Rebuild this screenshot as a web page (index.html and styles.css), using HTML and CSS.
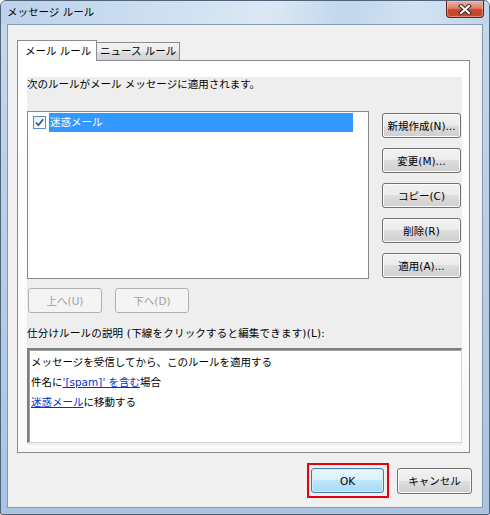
FILE: index.html
```html
<!DOCTYPE html>
<html lang="ja">
<head>
<meta charset="utf-8">
<title>メッセージ ルール</title>
<link rel="stylesheet" href="styles.css">
</head>
<body>
<div class="window">
  <div class="titlebar">
    <span class="title">メッセージ ルール</span>
    <button class="close" aria-label="閉じる">
      <svg width="14" height="11" viewBox="0 0 14 11">
        <path d="M3 2 L11 9 M11 2 L3 9" stroke="#3a2a28" stroke-width="4" stroke-linecap="square" fill="none"/>
        <path d="M3 2 L11 9 M11 2 L3 9" stroke="#ffffff" stroke-width="2" stroke-linecap="square" fill="none"/>
      </svg>
    </button>
  </div>
  <div class="client">
    <div class="tabs">
      <div class="tab active">メール ルール</div>
      <div class="tab">ニュース ルール</div>
    </div>
    <div class="panel">
      <div class="page">
        <div class="intro">次のルールがメール メッセージに適用されます。</div>
        <div class="rules-row">
          <div class="listbox">
            <div class="item">
              <svg class="check" width="13" height="13" viewBox="0 0 13 13">
                <defs>
                  <linearGradient id="cb" x1="0" y1="0" x2="1" y2="1">
                    <stop offset="0" stop-color="#e4ecf5"/>
                    <stop offset="1" stop-color="#ffffff"/>
                  </linearGradient>
                </defs>
                <rect x="0.5" y="0.5" width="12" height="12" fill="url(#cb)" stroke="#5b8bc4"/>
                <path d="M3 6.5 L5.4 9.2 L10.2 3.2" stroke="#1f5bb0" stroke-width="1.7" fill="none"/>
              </svg>
              <span class="item-label">迷惑メール</span>
            </div>
          </div>
          <div class="side-buttons">
            <button class="btn">新規作成(N)...</button>
            <button class="btn">変更(M)...</button>
            <button class="btn">コピー(C)</button>
            <button class="btn">削除(R)</button>
            <button class="btn">適用(A)...</button>
          </div>
        </div>
        <div class="move-row">
          <button class="btn disabled">上へ(U)</button>
          <button class="btn disabled">下へ(D)</button>
        </div>
        <div class="desc-label">仕分けルールの説明 (下線をクリックすると編集できます)(L):</div>
        <div class="desc">
          <div class="line">メッセージを受信してから、このルールを適用する</div>
          <div class="line">件名に<a href="#">'[spam]' を含む</a>場合</div>
          <div class="line"><a href="#">迷惑メール</a>に移動する</div>
        </div>
      </div>
    </div>
    <div class="footer">
      <div class="focus"><button class="btn ok">OK</button></div>
      <button class="btn cancel">キャンセル</button>
    </div>
  </div>
</div>
</body>
</html>
```

FILE: styles.css
```css
* { box-sizing: border-box; }

html, body {
  margin: 0;
  padding: 0;
  background: #ffffff;
}

body {
  font-family: "DejaVu Sans", "Noto Sans CJK JP", sans-serif;
  font-size: 10.5px;
  color: #000;
}

.window {
  width: 490px;
  height: 515px;
  border: 1px solid #50627a;
  border-radius: 6px 6px 2px 2px;
  background: linear-gradient(to bottom, #c7d9ec 0%, #b9d0e8 40%, #a9c4e1 100%);
  padding: 0 6px 6px 6px;
  display: flex;
  flex-direction: column;
  overflow: hidden;
}

.titlebar {
  height: 23px;
  display: flex;
  align-items: flex-start;
  margin: 0 -6px;
  padding: 0 5px 0 6px;
  background: linear-gradient(100deg, #bcd2ea 0%, #cfe0f1 35%, #dce8f4 55%, #c2d7ec 70%, #d2e2f2 85%, #c0d5eb 100%);
}

.title {
  flex: 1;
  line-height: 23px;
  color: #000;
}

.close {
  width: 38px;
  height: 17px;
  margin: 0;
  padding: 0;
  border: 1px solid #5c2418;
  border-top: none;
  border-radius: 0 0 4px 4px;
  background: linear-gradient(to bottom, #eab2a2 0%, #dd8068 45%, #c9452a 55%, #c4482c 100%);
  box-shadow: inset 0 0 0 1px rgba(255, 200, 180, 0.5);
  display: flex;
  align-items: center;
  justify-content: center;
}

.client {
  height: 484px;
  border: 1px solid #8598ad;
  background: #f0f0f0;
  display: flex;
  flex-direction: column;
}

.tabs {
  display: flex;
  align-items: flex-end;
  margin: 15px 0 0 9px;
  height: 20px;
  position: relative;
  z-index: 1;
}

.tab {
  width: 83px;
  height: 18px;
  line-height: 16px;
  padding: 0 0 0 3px;
  border: 1px solid #898c95;
  border-bottom: none;
  background: linear-gradient(to bottom, #f3f3f3 0%, #ebebeb 50%, #dddddd 50%, #d4d4d4 100%);
  color: #000;
  white-space: nowrap;
  overflow: hidden;
}

.tab.active {
  width: 80px;
  height: 21px;
  line-height: 20px;
  padding: 0 0 0 7px;
  margin-bottom: -1px;
  background: #ffffff;
}

.tab.active + .tab {
  border-left: none;
}

.panel {
  margin: 0 12px 0 9px;
  height: 393px;
  border: 1px solid #898c95;
  background: linear-gradient(to bottom, #ffffff 0%, #f9f9f9 100%);
  padding: 16px 7px 7px 9px;
}

.page {
  background: #eeeeee;
  height: 368px;
  padding-bottom: 2px;
  display: flex;
  flex-direction: column;
}

.intro {
  line-height: 14px;
  height: 14px;
}

.rules-row {
  display: flex;
  margin-top: 20px;
  gap: 13px;
}

.listbox {
  width: 342px;
  height: 168px;
  border: 1px solid #828790;
  background: #ffffff;
  padding: 1px 0 0 5px;
}

.item {
  display: flex;
  align-items: center;
  height: 19px;
}

.check {
  flex: none;
  margin-right: 3px;
}

.item-label {
  background: #3399ff;
  color: #ffffff;
  height: 19px;
  line-height: 19px;
  width: 304px;
  padding-left: 1px;
}

.side-buttons {
  display: flex;
  flex-direction: column;
  gap: 10px;
  margin-top: 2px;
}

.btn {
  font-family: inherit;
  font-size: 10.5px;
  color: #000;
  width: 79px;
  height: 25px;
  padding: 0;
  border: 1px solid #707070;
  border-radius: 3px;
  background: linear-gradient(to bottom, #f2f2f2 0%, #ebebeb 50%, #dddddd 50%, #cfcfcf 100%);
  box-shadow: inset 0 0 0 1px #fbfbfb;
  white-space: nowrap;
}

.move-row {
  display: flex;
  gap: 13px;
  margin-top: 9px;
  padding-left: 1px;
}

.btn.disabled {
  width: 74px;
  height: 25px;
  border-color: #adb2b5;
  background: #f4f4f4;
  box-shadow: none;
  color: #a0a0a0;
}

.desc-label {
  margin-top: 12px;
  line-height: 16px;
  height: 16px;
  letter-spacing: 0.2px;
}

.desc {
  margin-top: 7px;
  height: 95px;
  background: #ffffff;
  border-top: 2px solid #7f7f7f;
  border-left: 2px solid #7f7f7f;
  border-right: 1px solid #d6d6d6;
  border-bottom: 1px solid #d6d6d6;
  box-shadow: inset 1px 1px 0 #a0a0a0;
  padding: 2px 2px;
}

.line {
  line-height: 20px;
  height: 20px;
  white-space: nowrap;
}

.desc a {
  color: #0033cc;
  text-decoration: underline;
}

.footer {
  display: flex;
  justify-content: flex-end;
  align-items: center;
  gap: 8px;
  margin-top: 10px;
  padding-right: 10px;
}

.focus {
  border: 2px solid #e8000b;
  padding: 3px 3px 3px 2px;
}

.btn.ok {
  width: 73px;
  height: 25px;
  border-color: #3c7fb1;
  background: linear-gradient(to bottom, #eaf6fd 0%, #d9f0fc 50%, #bee6fd 50%, #a7d9f5 100%);
  box-shadow: inset 0 0 0 1px #d8eefa;
}

.btn.cancel {
  width: 75px;
  height: 26px;
}
```
